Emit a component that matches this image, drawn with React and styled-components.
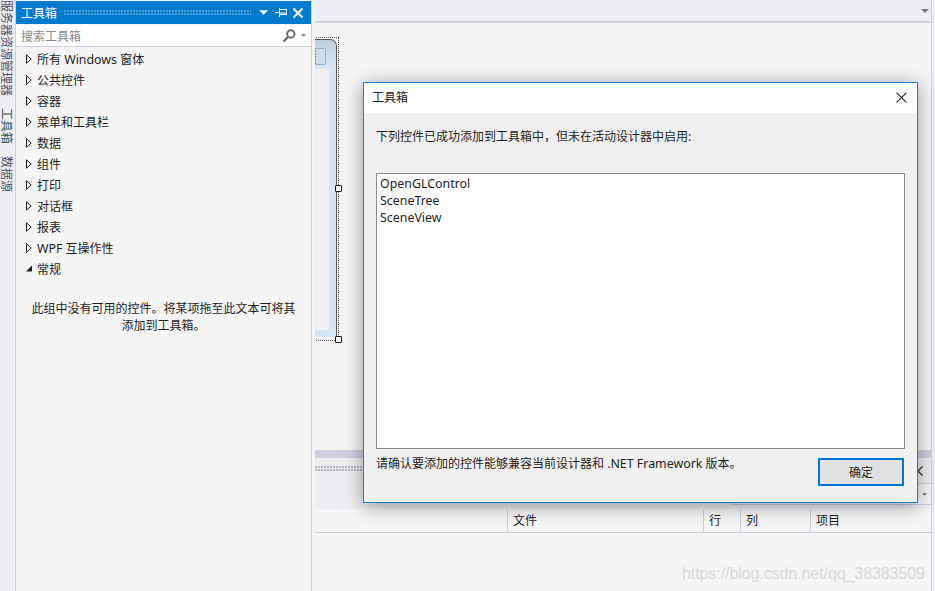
import React from "react";
import styled, { createGlobalStyle } from "styled-components";

const GlobalStyle = createGlobalStyle`
  html, body {
    margin: 0;
    padding: 0;
    height: 100%;
    overflow: hidden;
  }
  body {
    font-family: "Noto Sans", "Noto Sans CJK SC", sans-serif;
    font-size: 12px;
    color: #1e1e1e;
  }
  #root {
    height: 100%;
  }
`;

const Page = styled.div`
  position: relative;
  width: 935px;
  height: 591px;
  display: flex;
  background: #eeeef2;
  overflow: hidden;
`;

const Latin = styled.span`
  font-size: 12.4px;
`;

const Rail = styled.div`
  width: 15px;
  flex: none;
  display: flex;
  flex-direction: column;
  gap: 12px;
  background: #eeeef2;
`;

const RailTab = styled.div`
  writing-mode: vertical-rl;
  text-orientation: sideways;
  width: 13px;
  height: ${(p) => p.$chars * 12}px;
  line-height: 13px;
  font-size: 12px;
  white-space: nowrap;
  color: ${(p) => (p.$active ? "#3a5a4a" : "#55505f")};
`;

const ToolPanel = styled.div`
  width: 297px;
  flex: none;
  display: flex;
  flex-direction: column;
  background: #f5f5f5;
  border-left: 1px solid #ccd0de;
  border-right: 1px solid #ccd0de;
  box-sizing: border-box;
`;

const PanelTitle = styled.div`
  height: 23px;
  margin-top: 1px;
  display: flex;
  align-items: center;
  padding: 0 8px 0 5px;
  background: #007acc;
  color: #fff;
`;

const Grip = styled.div`
  flex: 1;
  height: 6px;
  margin: 0 8px 0 7px;
  background-image: radial-gradient(circle at 1px 1px, rgba(255, 255, 255, 0.3) 0.7px, transparent 0.8px);
  background-size: 3px 3px;
`;

const PanelActions = styled.div`
  display: flex;
  align-items: center;
  gap: 6px;
`;

const MenuMark = styled.span`
  display: flex;
  margin-right: 1px;
`;

const SearchBox = styled.div`
  height: 21px;
  display: flex;
  align-items: center;
  gap: 5px;
  padding: 0 5px;
  margin-top: 1px;
  background: #fff;
  border-bottom: 1px solid #ccd0de;
  color: #8a8a8a;
`;

const SearchLabel = styled.span`
  flex: 1;
`;

const Tree = styled.div`
  display: flex;
  flex-direction: column;
  padding-top: 1px;
`;

const TreeRow = styled.div`
  height: 21px;
  display: flex;
  align-items: center;
  padding-left: 10px;
  gap: 5px;
  white-space: pre;
`;

const ArrowSlot = styled.span`
  width: 6px;
  display: flex;
  justify-content: center;
`;

const EmptyNote = styled.p`
  margin: 21px auto 0;
  width: 270px;
  text-align: center;
  line-height: 17px;
`;

const Gutter = styled.div`
  width: 3px;
  flex: none;
  background: #f5f5f5;
`;

const Document = styled.div`
  width: 616px;
  flex: none;
  display: flex;
  flex-direction: column;
  background: #f5f5f5;
  border-right: 1px solid #ccd0de;
`;

const TabStrip = styled.div`
  height: 21px;
  flex: none;
  display: flex;
  justify-content: flex-end;
  align-items: center;
  padding-right: 2px;
  background: #eeeef2;
  border-bottom: 2px solid #ccd0de;
`;

const Designer = styled.div`
  position: relative;
  height: 427px;
  flex: none;
  overflow: hidden;
`;

const Selection = styled.div`
  position: absolute;
  left: -100px;
  top: 14px;
  width: 122px;
  height: 302px;
  border: 1px dotted #555;
`;

const FormWindow = styled.div`
  height: 297px;
  margin: 1px 1px 0 0;
  display: flex;
  flex-direction: column;
  background: #d6e4f3;
  border-top: 1px solid #555;
  border-right: 1px solid #555;
  border-top-right-radius: 7px;
`;

const FormCaption = styled.div`
  height: 29px;
  flex: none;
  display: flex;
  justify-content: flex-end;
  padding: 8px 10px 0 0;
  box-sizing: border-box;
  border-top-right-radius: 7px;
  background: linear-gradient(#bccddf, #dbe6f3);
`;

const CaptionButton = styled.div`
  width: 11px;
  height: 15px;
  border: 1px solid #9fb0c4;
  border-left: none;
  border-radius: 0 2px 2px 0;
  background-color: #cfdbe9;
  background-image: radial-gradient(circle at 1px 1px, #7f8c9c 0.8px, transparent 1px);
  background-size: 3px 3px;
  background-repeat: repeat-y;
  background-position: 0 4px;
`;

const FormClient = styled.div`
  height: 261px;
  margin-right: 7px;
  background: #f0f0f0;
`;

const Handle = styled.div`
  position: absolute;
  left: ${(p) => p.$x}px;
  top: ${(p) => p.$y}px;
  width: 5px;
  height: 5px;
  border: 1px solid #111;
  border-radius: 1px;
  background: #fff;
`;

const Splitter = styled.div`
  height: 8px;
  flex: none;
  background: #ccd0de;
`;

const ErrorBar = styled.div`
  height: 51px;
  flex: none;
  display: flex;
  flex-direction: column;
  background: #eeeef2;
`;

const ErrorTitle = styled.div`
  height: 25px;
  flex: none;
  display: flex;
  align-items: center;
  padding-right: 8px;
`;

const DottedGrip = styled.div`
  flex: 1;
  height: 6px;
  margin: 0 8px 3px 0;
  background-image: radial-gradient(circle at 1px 1px, #b0b0b8 0.7px, transparent 0.8px);
  background-size: 3px 3px;
`;

const FilterCombo = styled.div`
  width: 200px;
  height: 22px;
  margin-left: auto;
  display: flex;
  justify-content: flex-end;
  align-items: center;
  padding-right: 4px;
  box-sizing: border-box;
  background: #f5f5f5;
  border: 1px solid #ccd0de;
  border-right: none;
`;

const ColumnRow = styled.div`
  height: 23px;
  flex: none;
  display: flex;
  background: #f5f5f5;
  border-bottom: 1px solid #ccd0de;
`;

const Column = styled.div`
  width: ${(p) => p.$w}px;
  flex: ${(p) => (p.$grow ? 1 : "none")};
  box-sizing: border-box;
  padding-left: 5px;
  line-height: 23px;
  border-left: ${(p) => (p.$first ? "none" : "1px solid #ccd0de")};
`;

const Dialog = styled.div`
  position: absolute;
  left: 363px;
  top: 82px;
  width: 555px;
  height: 421px;
  box-sizing: border-box;
  display: flex;
  flex-direction: column;
  background: #f0f0f0;
  border: 1px solid #1b7fc3;
  box-shadow: 0 3px 18px rgba(0, 0, 0, 0.38);
`;

const DialogTitle = styled.div`
  height: 30px;
  flex: none;
  display: flex;
  justify-content: space-between;
  align-items: center;
  padding: 0 10px 2px 8px;
  box-sizing: border-box;
  background: #fff;
`;

const DialogBody = styled.div`
  flex: 1;
  display: flex;
  flex-direction: column;
  padding: 14px 12px 15px 12px;
`;

const Message = styled.div`
  height: 20px;
  line-height: 20px;
`;

const ControlList = styled.div`
  height: 276px;
  margin-top: 26px;
  padding: 1px 3px;
  box-sizing: border-box;
  background: #fff;
  border: 1px solid #8a8a8e;
`;

const ListItem = styled.div`
  height: 17px;
  line-height: 17px;
  font-size: 12.4px;
`;

const DialogFoot = styled.div`
  flex: 1;
  display: flex;
  justify-content: space-between;
  align-items: flex-start;
  padding-top: 9px;
`;

const FootNote = styled.div`
  line-height: 14px;
  margin-top: -1px;
`;

const OkButton = styled.button`
  width: 86px;
  height: 28px;
  margin-right: 1px;
  padding: 0;
  font: inherit;
  color: inherit;
  background: #e1e1e1;
  border: 2px solid #0078d7;
`;

const Watermark = styled.div`
  position: absolute;
  left: 682px;
  top: 565px;
  font-family: "Liberation Sans", sans-serif;
  font-size: 16px;
  letter-spacing: -0.08px;
  color: rgba(190, 190, 190, 0.55);
  white-space: nowrap;
`;

const ClosedArrow = () => (
  <svg width="6" height="10" viewBox="0 0 6 10">
    <path d="M0.5 0.8 L5.2 5 L0.5 9.2 Z" fill="none" stroke="#1e1e1e" />
  </svg>
);

const OpenArrow = () => (
  <svg width="7" height="7" viewBox="0 0 7 7">
    <path d="M7 0 V7 H0 Z" fill="#1e1e1e" />
  </svg>
);

const DownMark = ({ w = 5, color = "#777" }) => (
  <svg width={w} height={Math.ceil(w / 2)} viewBox="0 0 10 5">
    <path d="M0 0 H10 L5 5 Z" fill={color} />
  </svg>
);

const PinIcon = () => (
  <svg width="12" height="9" viewBox="0 0 12 9">
    <path d="M0 4.5 H4 M4.5 0 V9 M4.5 1.5 H11.5 V6.5 H4.5 M4.5 5 H11.5" fill="none" stroke="#fff" />
  </svg>
);

const CloseIcon = ({ size = 10, color = "#fff", weight = 2 }) => (
  <svg width={size} height={size} viewBox="0 0 10 10">
    <path d="M0.5 0.5 L9.5 9.5 M9.5 0.5 L0.5 9.5" fill="none" stroke={color} strokeWidth={weight} />
  </svg>
);

const SearchIcon = () => (
  <svg width="14" height="14" viewBox="0 0 14 14">
    <circle cx="8.8" cy="5" r="3.7" fill="none" stroke="#6d6d6d" strokeWidth="2" />
    <path d="M6 8 L1.5 12.5" stroke="#6d6d6d" strokeWidth="2.4" />
  </svg>
);

const groups = [
  <>所有 <Latin>Windows</Latin> 窗体</>,
  "公共控件",
  "容器",
  "菜单和工具栏",
  "数据",
  "组件",
  "打印",
  "对话框",
  "报表",
  <><Latin>WPF</Latin> 互操作性</>,
];
const controls = ["OpenGLControl", "SceneTree", "SceneView"];

export default function App() {
  return (
    <Page>
      <GlobalStyle />
      <Rail>
        <RailTab $chars={8}>服务器资源管理器</RailTab>
        <RailTab $chars={3} $active>工具箱</RailTab>
        <RailTab $chars={3}>数据源</RailTab>
      </Rail>

      <ToolPanel>
        <PanelTitle>
          工具箱
          <Grip />
          <PanelActions>
            <MenuMark><DownMark w={9} color="#fff" /></MenuMark>
            <PinIcon />
            <CloseIcon />
          </PanelActions>
        </PanelTitle>
        <SearchBox>
          <SearchLabel>搜索工具箱</SearchLabel>
          <SearchIcon />
          <DownMark />
        </SearchBox>
        <Tree>
          {groups.map((g, i) => (
            <TreeRow key={i}>
              <ArrowSlot><ClosedArrow /></ArrowSlot>
              <span>{g}</span>
            </TreeRow>
          ))}
          <TreeRow>
            <ArrowSlot><OpenArrow /></ArrowSlot>
            常规
          </TreeRow>
        </Tree>
        <EmptyNote>此组中没有可用的控件。将某项拖至此文本可将其添加到工具箱。</EmptyNote>
      </ToolPanel>

      <Gutter />

      <Document>
        <TabStrip>
          <DownMark w={8} />
        </TabStrip>
        <Designer>
          <Selection>
            <FormWindow>
              <FormCaption>
                <CaptionButton />
              </FormCaption>
              <FormClient />
            </FormWindow>
          </Selection>
          <Handle $x={20} $y={162} />
          <Handle $x={20} $y={313} />
        </Designer>
        <Splitter />
        <ErrorBar>
          <ErrorTitle>
            <DottedGrip />
            <CloseIcon color="#444" weight={1.5} />
          </ErrorTitle>
          <FilterCombo>
            <DownMark />
          </FilterCombo>
        </ErrorBar>
        <ColumnRow>
          <Column $w={192} $first />
          <Column $w={196}>文件</Column>
          <Column $w={37}>行</Column>
          <Column $w={70}>列</Column>
          <Column $grow>项目</Column>
        </ColumnRow>
      </Document>

      <Dialog>
        <DialogTitle>
          工具箱
          <CloseIcon size={11} color="#222" weight={1} />
        </DialogTitle>
        <DialogBody>
          <Message>下列控件已成功添加到工具箱中，但未在活动设计器中启用:</Message>
          <ControlList>
            {controls.map((c) => (
              <ListItem key={c}>{c}</ListItem>
            ))}
          </ControlList>
          <DialogFoot>
            <FootNote>请确认要添加的控件能够兼容当前设计器和 <Latin>.NET Framework</Latin> 版本。</FootNote>
            <OkButton>确定</OkButton>
          </DialogFoot>
        </DialogBody>
      </Dialog>

      <Watermark>https://blog.csdn.net/qq_38383509</Watermark>
    </Page>
  );
}
